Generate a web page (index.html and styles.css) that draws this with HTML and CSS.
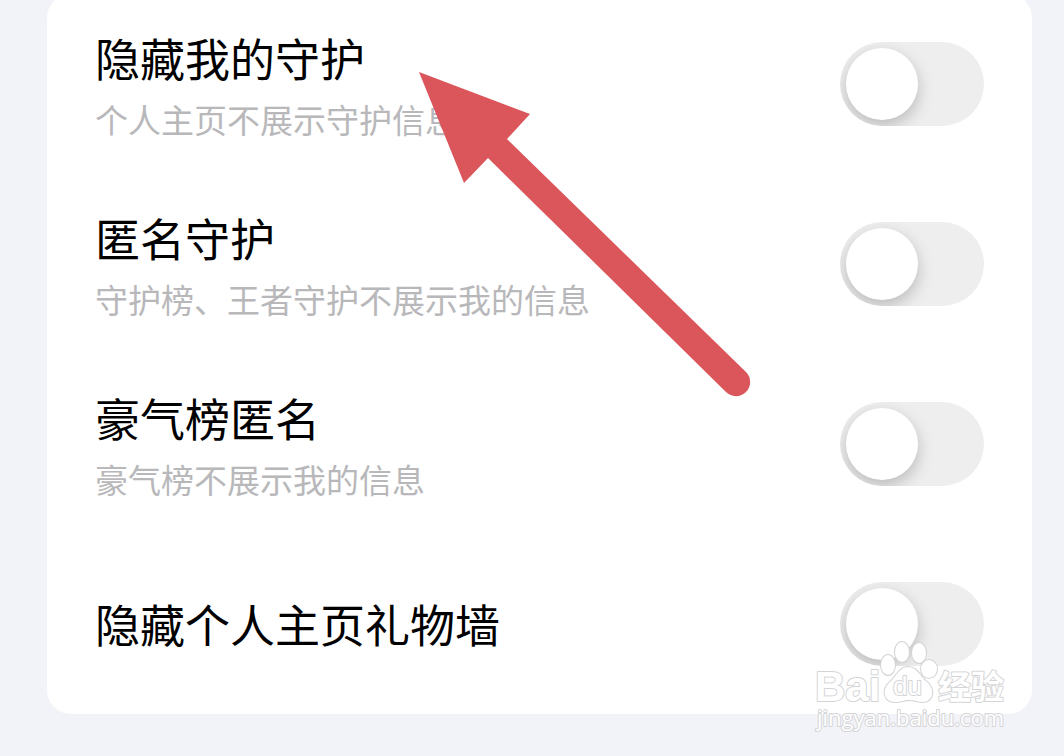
FILE: index.html
```html
<!DOCTYPE html>
<html lang="zh-CN">
<head>
<meta charset="utf-8">
<meta name="viewport" content="width=device-width, initial-scale=1">
<title>隐私设置</title>
<link rel="stylesheet" href="styles.css">
</head>
<body>
<main class="card">
  <div class="row">
    <label class="text" for="hide-guard"><span class="title">隐藏我的守护</span><span class="note">个人主页不展示守护信息</span></label>
    <input class="switch" type="checkbox" role="switch" id="hide-guard">
  </div>
  <div class="row">
    <label class="text" for="anon-guard"><span class="title">匿名守护</span><span class="note">守护榜、王者守护不展示我的信息</span></label>
    <input class="switch" type="checkbox" role="switch" id="anon-guard">
  </div>
  <div class="row">
    <label class="text" for="anon-rank"><span class="title">豪气榜匿名</span><span class="note">豪气榜不展示我的信息</span></label>
    <input class="switch" type="checkbox" role="switch" id="anon-rank">
  </div>
  <div class="row">
    <label class="text" for="hide-gifts"><span class="title">隐藏个人主页礼物墙</span></label>
    <input class="switch" type="checkbox" role="switch" id="hide-gifts">
  </div>
</main>
<svg class="arrow" viewBox="0 0 340 330" aria-hidden="true">
  <path d="M0 0 L111 42 L88 67 L327 300 A14 14 0 0 1 307 320 L69 86 L45 111 Z"/>
</svg>
<svg class="watermark" viewBox="0 0 200 100" role="img" aria-label="Baidu 经验">
  <g class="mark">
    <text class="brand" x="0" y="61">Bai</text>
    <ellipse cx="73" cy="25" rx="7" ry="10"/>
    <ellipse cx="87" cy="12" rx="7" ry="10"/>
    <ellipse cx="104" cy="13" rx="7" ry="10"/>
    <ellipse cx="114" cy="29" rx="8" ry="9"/>
    <path d="M93 27 C84 27 81 37 75 42 C66 50 69 62 80 62 C86 62 89 60 94 60 C99 60 103 62 108 62 C119 61 120 49 112 42 C105 37 103 27 93 27 Z"/>
    <text class="du" x="78" y="55">du</text>
    <text class="cjk" x="123" y="59">经验</text>
    <text class="site" x="2" y="86">jingyan.baidu.com</text>
  </g>
</svg>
</body>
</html>
```
FILE: styles.css
```css
* {
  box-sizing: border-box;
}

body {
  margin: 0;
  padding: 0 32px 42px 47px;
  background: #f2f3f8;
  color: #000;
  font-family: "Noto Sans CJK SC", sans-serif;
}

.card {
  margin-top: -6px;
  padding: 0 48px;
  background: #fff;
  border-radius: 24px;
}

.row {
  display: flex;
  align-items: center;
  justify-content: space-between;
  gap: 24px;
  min-height: 180px;
}

.text {
  display: flex;
  flex-direction: column;
}

.title {
  font-size: 45px;
  line-height: 74px;
}

.note {
  padding-bottom: 4px;
  font-size: 33px;
  line-height: 48px;
  color: #b8b8bb;
}

.switch {
  appearance: none;
  flex: none;
  width: 144px;
  height: 84px;
  margin: 0;
  padding: 6px;
  border-radius: 42px;
  background: #eee;
  overflow: hidden;
  cursor: pointer;
}

.switch::before {
  content: "";
  display: block;
  width: 72px;
  height: 72px;
  border-radius: 50%;
  background: #fff;
  box-shadow: 0 6px 16px rgba(0, 0, 0, 0.22);
}

.switch:checked::before {
  margin-left: auto;
}

.arrow {
  position: absolute;
  left: 419px;
  top: 72px;
  width: 340px;
  height: 330px;
  fill: #db565b;
  pointer-events: none;
}

.watermark {
  position: absolute;
  right: 49px;
  bottom: 16px;
  width: 200px;
  height: 100px;
  overflow: visible;
  pointer-events: none;
}

.mark {
  fill: #fff;
  stroke: #d4d4d6;
  stroke-width: 2px;
  stroke-linejoin: round;
  paint-order: stroke;
}

.brand {
  font: 700 42px "Liberation Sans", sans-serif;
}

.du {
  font: 400 26px "Liberation Sans", sans-serif;
}

.cjk {
  font: 700 33px "Noto Sans CJK SC", sans-serif;
}

.site {
  font: 400 22px "Open Sans", sans-serif;
}
```
